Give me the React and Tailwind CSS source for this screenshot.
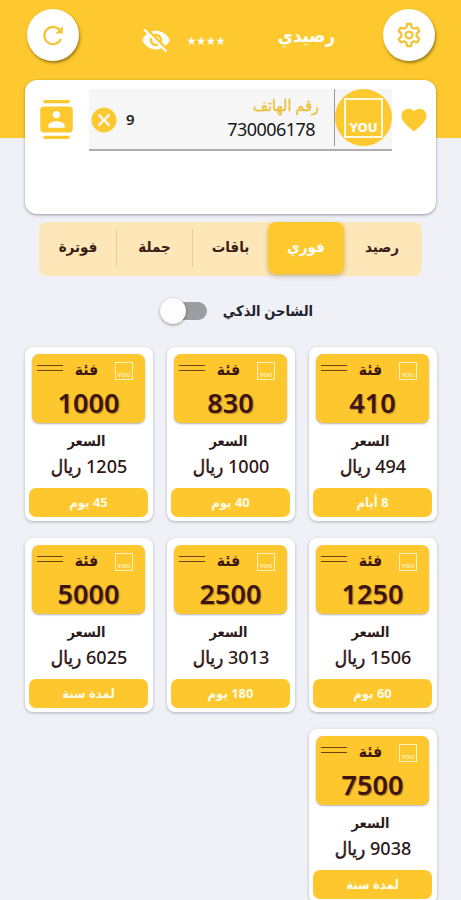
import React, { useState } from 'react';
import { MdVisibilityOff, MdContacts, MdFavorite, MdCancel } from 'react-icons/md';

const cards = [
  { amount: '410', price: '494', period: '8 أيام' },
  { amount: '830', price: '1000', period: '40 يوم' },
  { amount: '1000', price: '1205', period: '45 يوم' },
  { amount: '1250', price: '1506', period: '60 يوم' },
  { amount: '2500', price: '3013', period: '180 يوم' },
  { amount: '5000', price: '6025', period: 'لمدة سنة' },
  { amount: '7500', price: '9038', period: 'لمدة سنة' },
];

const tabs = ['رصيد', 'فوري', 'باقات', 'جملة', 'فوترة'];

const RoundButton = ({ children }) => (
  <button className="flex h-[52px] w-[52px] items-center justify-center rounded-full bg-white text-[#f3c437] shadow-[1px_2px_3px_rgba(90,70,0,0.6)]">
    {children}
  </button>
);

const RefreshIcon = () => (
  <svg width="23" height="23" viewBox="0 0 24 24" fill="none" stroke="currentColor" strokeWidth="2.3">
    <path d="M19.800 15.500A9 9 0 1 1 18.400 6.200" />
    <path d="M21.800 2V9.800H14z" fill="currentColor" stroke="none" />
  </svg>
);

const GearIcon = () => (
  <svg width="26" height="26" viewBox="0 0 24 24" fill="none" stroke="currentColor" strokeWidth="2.1" strokeLinejoin="round">
    <path d="M10.200 1.800h3.600l.700 3.200 2.100 1.200 3.100-1 1.800 3.200-2.400 2.300v2.600l2.400 2.300-1.800 3.200-3.100-1-2.100 1.200-.700 3.200h-3.600L9.500 19l-2.100-1.200-3.100 1-1.800-3.200 2.400-2.300v-2.600L2.500 8.400l1.800-3.200 3.100 1L9.500 5z" />
    <circle cx="12" cy="12" r="3.200" />
  </svg>
);

const PackageCard = ({ card }) => (
  <div className="flex h-[174px] w-[128px] flex-col rounded-[8px] bg-white pt-[7px] shadow-[0_1px_3px_rgba(60,60,80,0.35)]">
    <div className="ml-[7px] mr-[8px] h-[69px] rounded-[7px] bg-[#fdc72d] text-[#3c1511] shadow-[0_1px_2px_rgba(60,60,80,0.4)]">
      <div className="flex h-[30px] items-center">
        <div className="mr-[12px] mt-[4px] flex h-[18px] w-[18px] shrink-0 items-end justify-center border border-[#fff0bd] text-[6px] font-bold leading-[8px] text-[#fff0bd]">
          YOU
        </div>
        <div className="mr-[16px] w-[25px] shrink-0 whitespace-nowrap text-center text-[15.5px] font-bold leading-[20px]">فئة</div>
        <div className="mr-[11px] flex w-[26px] shrink-0 flex-col gap-[4px] pb-[3px]">
          <div className="h-px bg-[#6d4210]" />
          <div className="h-px bg-[#6d4210]" />
        </div>
      </div>
      <div className="text-center text-[27px] font-semibold leading-[37px] [text-shadow:1px_1px_1px_rgba(60,21,17,0.4)]">
        {card.amount}
      </div>
    </div>
    <div className="mt-[7px] pr-[5px] text-center text-[14.5px] font-semibold leading-[20px] text-[#2d1b1b]">السعر</div>
    <div className="mt-[4px] h-[24px] whitespace-nowrap text-center text-[18px] font-medium leading-[24px] text-[#2d1717]">
      {card.price} <span className="text-[19px] [-webkit-text-stroke:0.5px_#2d1717]">ريال</span>
    </div>
    <div className="ml-[4px] mr-[5px] mt-[10px] h-[29px] rounded-[7px] bg-[#fdc72d] text-center text-[13px] font-bold leading-[28px] text-[#fffbe8]">
      {card.period}
    </div>
  </div>
);

const App = () => {
  const [activeTab, setActiveTab] = useState(1);
  const [hidden, setHidden] = useState(true);

  return (
    <div dir="rtl" className="h-[900px] w-[461px] overflow-hidden bg-[#eff1f6] font-['Noto_Sans','DejaVu_Sans_Condensed','DejaVu_Sans',sans-serif]">
      <div className="h-[138px] bg-[#fdc92e]">
        <div className="flex h-[80px] items-start pl-[27px] pr-[26px] pt-[9px]">
          <RoundButton>
            <GearIcon />
          </RoundButton>
          <h1 className="mr-[48px] mt-[12px] w-[56px] whitespace-nowrap text-[18.5px] font-bold leading-[28px] text-white">رصيدي</h1>
          <div className="mr-[52px] mt-[20px] w-[42px] whitespace-nowrap text-center text-[12px] font-bold leading-[24px] text-white">
            {hidden ? '★★★★' : '0'}
          </div>
          <button className="mr-[14px] mt-[16px] text-white" onClick={() => setHidden(!hidden)}>
            <MdVisibilityOff size={30} />
          </button>
          <div className="mr-auto">
            <RoundButton>
              <RefreshIcon />
            </RoundButton>
          </div>
        </div>
        <div className="mx-[25px] flex h-[134px] items-start rounded-[12px] bg-white pt-[9px] shadow-[0_1px_3px_rgba(60,60,80,0.5)]">
          <MdFavorite size={30} className="mr-[7px] mt-[16px] text-[#fdc92e]" />
          <div className="mr-[7px] flex h-[62px] w-[303px] border-b-2 border-[#adadad] bg-[#f6f6f6]">
            <div className="flex h-[57px] w-[57px] items-center justify-center rounded-full bg-[#fdc92e]">
              <div className="flex h-[40px] w-[39px] items-end justify-center border-2 border-[#fff9df] pb-[1px] text-[13px] font-extrabold leading-[16px] text-white">
                YOU
              </div>
            </div>
            <div className="h-[57px] w-px bg-[#999]" />
            <div className="mr-[15px] w-[92px]">
              <div className="mt-[6px] whitespace-nowrap text-[16px] leading-[20px] text-[#edbe38] [-webkit-text-stroke:0.3px_#edbe38]">رقم الهاتف</div>
              <div className="mr-[4px] mt-[2px] flex h-[24px] items-center whitespace-nowrap text-[18px] leading-[24px] tracking-[-0.55px] text-[#161616]">
                730006178
              </div>
            </div>
            <div className="mr-auto flex h-[62px] items-center">
              <span className="ml-[7px] pb-[2px] text-[15px] font-semibold leading-[20px] text-[#222]">9</span>
              <MdCancel size={30} className="text-[#fdc92e]" />
            </div>
          </div>
          <MdContacts size={39} className="mr-[13px] mt-[11px] text-[#fdc92e]" />
        </div>
      </div>

      <div className="mx-[39px] mt-[84px] flex h-[54px] rounded-[8px] bg-[#fde7b8] pr-[2px]">
        {tabs.map((tab, i) => (
          <button
            key={tab}
            onClick={() => setActiveTab(i)}
            className={
              i === activeTab
                ? 'h-[52px] w-[76px] rounded-[8px] bg-[#fdc92e] pb-[3px] text-[15px] font-bold text-white shadow-[0_2px_5px_rgba(100,80,20,0.35)]'
                : 'flex h-[52px] w-[76px] items-center text-[15px] font-semibold text-[#3b1d17]'
            }
          >
            <span className="flex-1 pb-[3px] text-center">{tab}</span>
            {(i === 2 || i === 3) && <span className="h-[38px] w-px bg-[#e2cda3]" />}
          </button>
        ))}
      </div>

      <div className="mt-[22px] flex h-[26px] items-center pr-[148px]">
        <span className="w-[90px] whitespace-nowrap pb-[3px] text-[14.5px] font-semibold leading-[24px] text-[#1f2230]">الشاحن الذكي</span>
        <div className="mr-[16px] flex h-[18px] w-[45px] items-center justify-end rounded-full bg-[#9c9da0]">
          <div className="-ml-[2px] h-[26px] w-[26px] shrink-0 rounded-full bg-[#fdfdfd] shadow-[0_1px_3px_rgba(0,0,0,0.4)]" />
        </div>
      </div>

      <div className="ml-[25px] mr-[24px] mt-[23px] grid grid-cols-[128px_128px_128px] justify-between gap-y-[17px]">
        {cards.map((card) => (
          <PackageCard key={card.amount} card={card} />
        ))}
      </div>
    </div>
  );
};

export default App;
